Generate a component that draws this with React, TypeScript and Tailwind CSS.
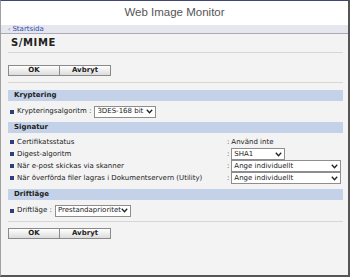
import React from 'react';

const font = { fontFamily: '"DejaVu Sans", Verdana, sans-serif' };

function Chevron() {
  return (
    <svg width="7" height="5" viewBox="0 0 7 5" className="shrink-0">
      <path d="M0.8 0.8 L3.5 3.8 L6.2 0.8" fill="none" stroke="#222" strokeWidth="1.3" />
    </svg>
  );
}

function Select({ value, width }: { value: string; width: string }) {
  return (
    <div className={`${width} h-[12px] bg-white border border-[#8e8e8e] flex items-center justify-between pl-[2px] pr-[2px] text-[7px] text-[#222] leading-none whitespace-nowrap`}>
      <span>{value}</span>
      <Chevron />
    </div>
  );
}

function Bullet() {
  return <span className="inline-block w-[4px] h-[4px] bg-[#2c3f7c] mr-[3px] shrink-0" />;
}

function Buttons() {
  return (
    <div className="flex h-[11px]">
      {['OK', 'Avbryt'].map(b => (
        <div
          key={b}
          className="w-[52px] h-[11px] border border-[#8a8a8a] bg-gradient-to-b from-white to-[#dcdcdc] flex items-center justify-center text-[7px] font-bold text-[#222] leading-none -ml-px first:ml-0"
        >
          {b}
        </div>
      ))}
    </div>
  );
}

function SectionBar({ title }: { title: string }) {
  return (
    <div className="h-[11px] bg-[#c3d2e8] flex items-center pl-[6px] text-[7px] font-bold text-[#222] leading-none">
      {title}
    </div>
  );
}

export default function App() {
  const signatur = [
    { label: 'Certifikatsstatus', value: null, text: 'Använd inte' },
    { label: 'Digest-algoritm', value: 'SHA1', w: 'w-[54px]' },
    { label: 'När e-post skickas via skanner', value: 'Ange individuellt', w: 'w-[110px]' },
    { label: 'När överförda filer lagras i Dokumentservern (Utility)', value: 'Ange individuellt', w: 'w-[110px]' },
  ];

  return (
    <div style={font} className="w-[350px] h-[277px] overflow-hidden flex flex-col bg-[#f3f3f3] border-t-[1px] border-t-[#3f4577] border-l border-l-[#a0a0a0] border-r-2 border-r-[#555] border-b-2 border-b-[#555]">
      {/* header */}
      <div className="h-[24px] shrink-0 bg-white flex items-center justify-center text-[11.5px] text-[#555]" style={{ fontFamily: '"Liberation Sans", Arial, sans-serif' }}>
        Web Image Monitor
      </div>

      {/* breadcrumb */}
      <div className="h-[9px] shrink-0 bg-[#e6e6ee] border-b border-[#a9a9b9] flex items-center pl-[7px] text-[7px] text-[#2b4fa8] leading-none">
        <span className="mr-[2px] text-[6px]">‹</span>Startsida
      </div>

      {/* content */}
      <div className="flex-1 pl-[7px] pr-[5px] text-[#222]">
        <div className="h-[19px] flex items-center pl-[3px] text-[10px] font-bold tracking-[0.6px] leading-none border-b border-[#d6d6d6]">
          S/MIME
        </div>

        <div className="mt-[12px]">
          <Buttons />
        </div>
        <div className="mt-[6px] border-b border-[#d6d6d6]" />

        <div className="mt-[7px]">
          <SectionBar title="Kryptering" />
          <div className="h-[21px] flex items-center pl-[2px] text-[7px] leading-none">
            <Bullet />
            <span>Krypteringsalgoritm :</span>
            <span className="ml-[3px]"><Select value="3DES-168 bit" width="w-[62px]" /></span>
          </div>
        </div>

        <SectionBar title="Signatur" />
        <div className="pt-[3px] pb-[5px] pl-[2px] text-[7px] leading-none">
          {signatur.map(r => (
            <div key={r.label} className="h-[12px] flex items-center">
              <Bullet />
              <span className="w-[210px] shrink-0 whitespace-nowrap">{r.label}</span>
              <span className="mr-[2px]">:</span>
              {r.value ? <Select value={r.value} width={r.w!} /> : <span>{r.text}</span>}
            </div>
          ))}
        </div>

        <SectionBar title="Driftläge" />
        <div className="h-[22px] flex items-center pl-[2px] text-[7px] leading-none border-b border-[#d6d6d6]">
          <Bullet />
          <span>Driftläge :</span>
          <span className="ml-[3px]"><Select value="Prestandaprioritet" width="w-[76px]" /></span>
        </div>

        <div className="mt-[6px]">
          <Buttons />
        </div>
      </div>
    </div>
  );
}
